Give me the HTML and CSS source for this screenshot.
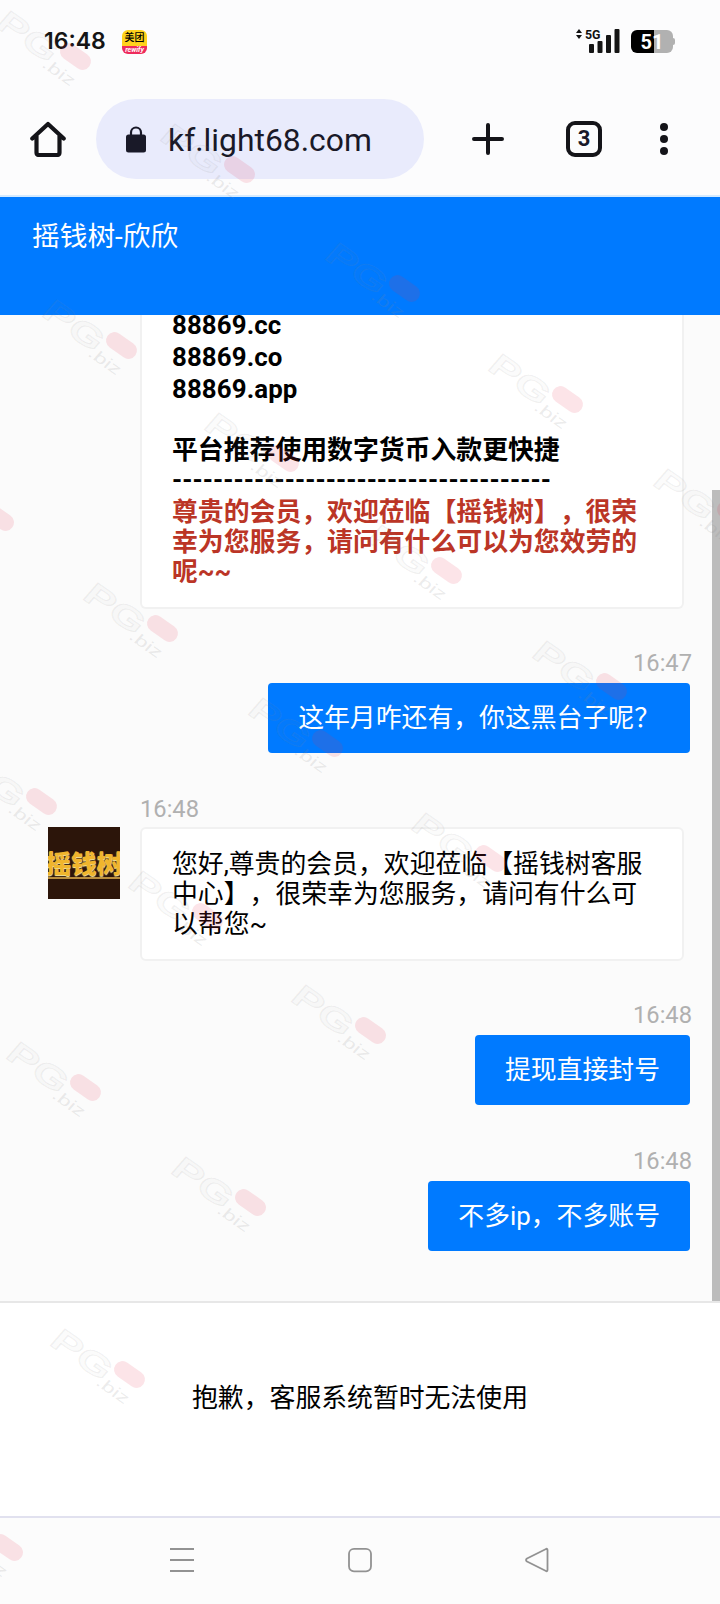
FILE: index.html
```html
<!DOCTYPE html>
<html lang="zh-CN">
<head>
<meta charset="utf-8">
<title>摇钱树-欣欣</title>
<link rel="stylesheet" href="styles.css">
</head>
<body>
<div class="screen">
  <header class="status">
    <span class="clock">16:48</span>
    <span class="app-badge"><b>美团</b><i>rewify</i></span>
    <svg class="signal" width="46" height="28" viewBox="0 0 46 28">
      <path d="M1 8L4 4L7 8ZM1 10L4 14L7 10Z" fill="#111"/>
      <text x="10" y="13.500" class="net" textLength="15.500" lengthAdjust="spacingAndGlyphs">5G</text>
      <g fill="#151515"><rect x="14" y="19" width="5" height="9" rx="1"/><rect x="22.500" y="16" width="5" height="12" rx="1"/><rect x="31" y="10" width="5" height="18" rx="1"/><rect x="39.500" y="4" width="5" height="24" rx="1"/></g>
    </svg>
    <span class="battery"><span>51</span></span>
  </header>
  <div class="toolbar">
    <svg class="home" width="36" height="36" viewBox="0 0 36 36" fill="none" stroke="#141419" stroke-width="4.200" stroke-linejoin="round" stroke-linecap="round"><path d="M2.300 17.500L18 3L33.700 17.500M6.500 15V31.500Q6.500 34 9 34H27Q29.500 34 29.500 31.500V15"/></svg>
    <div class="url">
      <svg width="20" height="27" viewBox="0 0 20 27"><path d="M5 9V6.500a5 5 0 0 1 10 0V9" fill="none" stroke="#191928" stroke-width="2.200"/><rect y="8.500" width="20" height="18" rx="2.500" fill="#191928"/></svg>
      <span>kf.light68.com</span>
    </div>
    <svg class="plus" width="32" height="32" viewBox="0 0 32 32" stroke="#141419" stroke-width="4" stroke-linecap="round"><path d="M2 16H30M16 2V30"/></svg>
    <span class="tabs">3</span>
    <svg class="more" width="8" height="32" viewBox="0 0 8 32" fill="#141419"><circle cx="4" cy="4" r="4"/><circle cx="4" cy="16" r="4"/><circle cx="4" cy="28" r="4"/></svg>
  </div>
  <div class="title">摇钱树-欣欣</div>
  <main class="chat">
    <section class="card notice">
      <p class="domain">88869.cc</p><p class="domain">88869.co</p><p class="domain">88869.app</p>
      <p class="promo">平台推荐使用数字货币入款更快捷</p>
      <p class="dashes">-------------------------------------</p>
      <p class="welcome">尊贵的会员，欢迎莅临【摇钱树】，很荣<br>幸为您服务，请问有什么可以为您效劳的<br>呢~~</p>
    </section>
    <section class="sent first"><time>16:47</time><div class="bubble">这年月咋还有，你这黑台子呢？</div></section>
    <section class="received">
      <div class="avatar"><span>摇钱树</span></div>
      <div class="body"><time>16:48</time><div class="card reply">您好,尊贵的会员，欢迎莅临【摇钱树客服<br>中心】，很荣幸为您服务，请问有什么可<br>以帮您~</div></div>
    </section>
    <section class="sent second"><time>16:48</time><div class="bubble">提现直接封号</div></section>
    <section class="sent third"><time>16:48</time><div class="bubble">不多ip，不多账号</div></section>
    <div class="scrollbar"></div>
  </main>
  <div class="notice-bar">抱歉，客服系统暂时无法使用</div>
  <nav class="nav">
    <svg width="24" height="26" viewBox="0 0 24 26" stroke="#929292" stroke-width="2"><path d="M0 2H24M0 13H24M0 24H24"/></svg>
    <svg width="24" height="26" viewBox="0 0 24 26" fill="none" stroke="#929292" stroke-width="1.800"><rect x="1" y="1.800" width="22" height="22.500" rx="5"/></svg>
    <svg width="24" height="26" viewBox="0 0 24 26" fill="none" stroke="#929292" stroke-width="1.800" stroke-linejoin="round"><path d="M22.500 3V23Q22.500 25 20.500 23.800L2 14.500Q0 13 2 11.500L20.500 2.200Q22.500 1 22.500 3Z"/></svg>
  </nav>
  <svg class="marks" width="720" height="1604" viewBox="0 0 720 1604">
    <defs>
      <g id="mark">
        <g transform="translate(-1 21) rotate(35) skewX(-6)">
          <text class="mark-big" textLength="66" lengthAdjust="spacingAndGlyphs">PG</text>
          <text class="mark-small" x="62" y="6" textLength="36" lengthAdjust="spacingAndGlyphs">.biz</text>
        </g>
        <rect x="63.500" y="43" width="34" height="17" rx="8.500" transform="rotate(35 80.500 51.500)" fill="#e83250" fill-opacity=".13"/>
      </g>
    </defs>
    <use href="#mark" x="-5" y="5"/><use href="#mark" x="159" y="118"/><use href="#mark" x="324" y="237"/><use href="#mark" x="41" y="294"/><use href="#mark" x="487" y="348"/><use href="#mark" x="203" y="407"/><use href="#mark" x="652" y="463"/><use href="#mark" x="366" y="519"/><use href="#mark" x="-82" y="466"/><use href="#mark" x="82" y="577"/><use href="#mark" x="531" y="635"/><use href="#mark" x="247" y="692"/><use href="#mark" x="-39" y="750"/><use href="#mark" x="410" y="807"/><use href="#mark" x="127" y="865"/><use href="#mark" x="290" y="979"/><use href="#mark" x="5" y="1036"/><use href="#mark" x="170" y="1151"/><use href="#mark" x="49" y="1323"/><use href="#mark" x="-73" y="1496"/>
  </svg>
</div>
</body>
</html>
```
FILE: styles.css
```css
* { box-sizing: border-box; }
body { margin: 0; background: #fcfcfd; font-family: Roboto, "Noto Sans CJK SC", sans-serif; font-size: 25.850px; color: #000; text-spacing-trim: space-all; }
p { margin: 0; }
.screen { position: relative; width: 720px; height: 1604px; overflow: hidden; display: flex; flex-direction: column; }

.status { height: 82px; flex: none; display: flex; align-items: flex-start; padding: 25px 45px 0 44px; }
.clock { font: 600 23px/32px Inter, sans-serif; width: 78px; color: #151515; }
.app-badge { margin-top: 5px; width: 25px; height: 24px; border-radius: 6px; overflow: hidden; background: linear-gradient(#ffd21d 66%, #ee2b5c 66%); display: flex; flex-direction: column; align-items: center; white-space: nowrap; }
.app-badge b { font-size: 10px; line-height: 16px; font-weight: 500; }
.app-badge i { font-size: 7px; line-height: 8px; color: #fff; font-weight: 700; }
.signal { margin-left: auto; margin-right: 10px; }
.net { font: 700 13.500px Roboto, sans-serif; fill: #111; }
.battery { position: relative; width: 42px; height: 23px; margin-top: 5px; border-radius: 6px; background: linear-gradient(90deg, #000 55%, #b1b1b1 55%); text-align: center; color: #fff; font: 700 20px/24px Roboto, sans-serif; margin-right: 2px; }
.battery::after { content: ""; position: absolute; left: 42px; top: 8px; width: 2px; height: 7px; background: #b1b1b1; border-radius: 0 2px 2px 0; }

.toolbar { height: 113px; flex: none; display: flex; align-items: center; padding: 1px 52px 0 30px; color: #191928; }
.url { width: 328px; height: 80px; margin-left: 30px; border-radius: 40px; background: #e9ebfc; display: flex; align-items: center; padding-left: 30px; gap: 22px; font-size: 31.850px; }
.url span { line-height: 40px; padding-top: 2px; }
.plus { margin-left: 48px; }
.tabs { width: 36px; height: 36px; margin-left: 62px; border: 4px solid #141419; border-radius: 9px; text-align: center; font: 700 22px/28px Roboto, sans-serif; }
.more { margin-left: 58px; }

.title { height: 120px; flex: none; border-top: 2px solid #d4eaff; background: #007aff; color: #fff; font-size: 27.700px; line-height: 40px; padding: 20px 32px; }

.chat { position: relative; height: 986px; flex: none; background: #fbfbfb; overflow: hidden; white-space: nowrap; }
.card { border: 2px solid #f1f1f1; border-radius: 6px; background: #fff; width: 544px; }
.notice { margin-left: 140px; height: 294px; border-top: 0; border-radius: 0 0 6px 6px; padding: 0 30px; font-weight: 700; }
.domain { line-height: 32.200px; letter-spacing: .1px; position: relative; top: -6px; }
.promo { line-height: 30px; margin-top: 23px; }
.dashes { line-height: 30px; letter-spacing: .06px; }
.welcome { line-height: 30px; color: #bb3526; margin-top: 2px; }
time { font-size: 23.700px; line-height: 30px; height: 32px; color: #b0b0b0; display: block; }
.sent { display: flex; flex-direction: column; align-items: flex-end; padding-right: 30px; }
.sent time { margin-right: -2px; }
.bubble { height: 70px; margin-top: 3px; padding: 0 30px; border-radius: 4px; background: #007aff; color: #fff; line-height: 70px; }
.first { margin-top: 39px; }
.received { display: flex; padding-left: 48px; margin-top: 40px; }
.avatar { width: 72px; height: 72px; margin: 34px 20px 0 0; background: #2c150a; overflow: hidden; display: flex; justify-content: center; align-items: center; }
.avatar span { font: 900 25.500px/30px "Noto Sans CJK SC", sans-serif; color: #f0b52d; border-bottom: 2px solid #b98d3d; text-shadow: 0 1px 1px #fff0a0; }
.body time { padding-top: 1px; }
.reply { height: 134px; margin-top: 2px; padding: 20px 30px; line-height: 30px; }
.second { margin-top: 39px; }
.third { margin-top: 41px; }
.scrollbar { position: absolute; right: 0; top: 175px; width: 8px; height: 811px; background: #bcbcbc; }

.notice-bar { height: 217px; flex: none; border-top: 2px solid #e7e7e7; border-bottom: 2px solid #e1e1ef; background: #fff; display: flex; align-items: center; justify-content: center; padding-bottom: 28px; }
.nav { flex: 1; background: #fcfcfc; display: flex; justify-content: center; gap: 153.500px; padding: 29px 1px 0 0; }

.marks { position: absolute; inset: 0; pointer-events: none; }
.mark-big { font: 700 32px "Liberation Sans", sans-serif; fill: #999; fill-opacity: .03; stroke: #888; stroke-opacity: .13; stroke-width: 1; }
.mark-small { font: 400 16px "Liberation Sans", sans-serif; fill: #888; fill-opacity: .17; }
```
